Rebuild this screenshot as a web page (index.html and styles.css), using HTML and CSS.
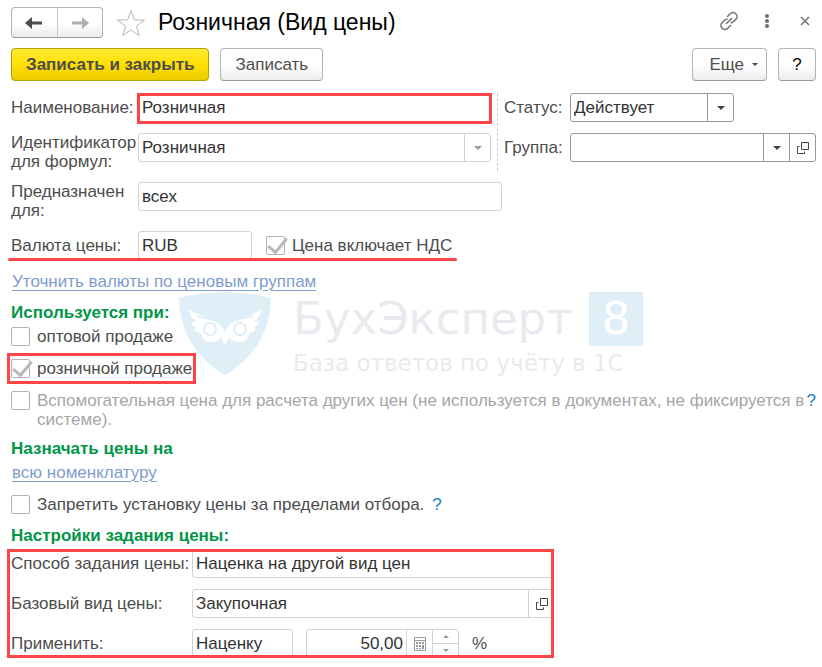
FILE: index.html
```
<!DOCTYPE html>
<html lang="ru">
<head>
  <meta charset="utf-8">
  <meta name="viewport" content="width=device-width, initial-scale=1">
  <title>Розничная (Вид цены)</title>
  <link rel="stylesheet" href="styles.css">
</head>
<body>

  <form class="window">
    <header class="header">
      <div class="nav">
        <button type="button" class="nav-btn" aria-label="Назад">
          <svg width="18" height="14" viewBox="0 0 18 14"><path d="M0 7l7-6v4.500h10v3H7V13z" fill="#4d4d4d"/></svg>
        </button>
        <button type="button" class="nav-btn" aria-label="Вперед">
          <svg width="18" height="14" viewBox="0 0 18 14"><path d="M18 7l-7-6v4.500H1v3h10V13z" fill="#b0b0b0"/></svg>
        </button>
      </div>
      <button type="button" class="star" aria-label="В избранное">
        <svg width="30" height="28" viewBox="0 0 30 28"><path d="M15 1.500l3.400 9.400 10.100.2-8.100 6 3 9.600L15 21l-8.400 5.700 3-9.600-8.100-6 10.100-.2z" fill="#fff" stroke="#b4b9be"/></svg>
      </button>
      <h1 class="title">Розничная (Вид цены)</h1>
      <div class="header-tools">
        <button type="button" class="icon-btn" aria-label="Ссылка">
          <svg width="20" height="20" viewBox="0 0 20 20" fill="none" stroke="#777" stroke-width="1.600" stroke-linecap="round"><path d="M8.500 5.500l2.700-2.700a3.600 3.600 0 0 1 5.800.2 3.700 3.700 0 0 1 0 5.200l-2.600 2.600a3.500 3.500 0 0 1-2.400 1M11.500 14.500l-2.700 2.700a3.600 3.600 0 0 1-5.800-.2 3.700 3.700 0 0 1 0-5.200l2.600-2.600a3.500 3.500 0 0 1 2.400-1M7.500 12.500l5-5"/></svg>
        </button>
        <button type="button" class="icon-btn" aria-label="Меню">
          <svg width="6" height="16" viewBox="0 0 6 16" fill="#6e6e6e"><circle cx="3" cy="3" r="2"/><circle cx="3" cy="8" r="2"/><circle cx="3" cy="13" r="2"/></svg>
        </button>
        <button type="button" class="icon-btn" aria-label="Закрыть">
          <svg width="10" height="10" viewBox="0 0 10 10" stroke="#777" stroke-width="1.600"><path d="M1 1l8 8M9 1L1 9"/></svg>
        </button>
      </div>
    </header>

    <div class="toolbar">
      <button type="button" class="btn btn-primary">Записать и закрыть</button>
      <button type="button" class="btn">Записать</button>
      <button type="button" class="btn btn-more">Еще <span class="caret"></span></button>
      <button type="button" class="btn btn-help">?</button>
    </div>

    <div class="columns">
      <div class="rows main-fields">
        <div class="row">
          <label for="name">Наименование:</label>
          <div class="field marked"><input type="text" id="name" value="Розничная"></div>
        </div>
        <div class="row">
          <label for="ident">Идентификатор для формул:</label>
          <div class="field muted">
            <select id="ident"><option>Розничная</option></select>
            <span class="cell"><span class="caret"></span></span>
          </div>
        </div>
      </div>
      <div class="rows side-fields">
        <div class="row">
          <label for="status">Статус:</label>
          <div class="field status">
            <select id="status"><option>Действует</option></select>
            <span class="cell"><span class="caret"></span></span>
          </div>
        </div>
        <div class="row">
          <label for="group">Группа:</label>
          <div class="field">
            <select id="group"><option></option></select>
            <span class="cell"><span class="caret"></span></span>
            <button type="button" class="cell" aria-label="Открыть">
              <svg width="12" height="12" viewBox="0 0 12 12" fill="none" stroke="#444"><path d="M4.500.5h7v7h-7zM2.500 4.500h-2v7h7v-2"/></svg>
            </button>
          </div>
        </div>
      </div>
    </div>

    <div class="rows more-fields">
      <div class="row">
        <label for="target">Предназначен для:</label>
        <div class="field muted"><input type="text" id="target" value="всех"></div>
      </div>
      <div class="row underlined">
        <label for="currency">Валюта цены:</label>
        <div class="currency">
          <div class="field muted"><input type="text" id="currency" value="RUB"></div>
          <label class="check"><input type="checkbox" checked> Цена включает НДС</label>
        </div>
      </div>
    </div>

    <p class="link-line"><a href="#">Уточнить валюты по ценовым группам</a></p>

    <section class="section">
      <h2>Используется при:</h2>
      <div class="checks">
        <label class="check"><input type="checkbox"> оптовой продаже</label>
        <label class="check check-marked"><input type="checkbox" checked> розничной продаже</label>
        <div class="check-line extra">
          <label class="check disabled"><input type="checkbox"> <span>Вспомогательная цена для расчета других цен (не используется в документах, не фиксируется в системе).</span></label>
          <a class="hint" href="#">?</a>
        </div>
      </div>
      <div class="watermark" aria-hidden="true">
        <svg class="shield" width="92" height="84" viewBox="0 0 92 84">
          <path d="M0 6Q46-6 92 6C91 42 74 66 46 83 18 66 1 42 0 6z" fill="#cce4f3"/>
          <path d="M10 16c6 8 19 8 27 13 5 3 8 7 9 12 1-5 4-9 9-12 8-5 21-5 27-13 0 7-3 11-7 13 2 1 3 1 5 0-1 4-3 6-6 7l3 1c-2 3-5 4-7 4 0 6-5 9-10 9-5 0-8-2-10-5l-4 9-4-9c-2 3-5 5-10 5s-10-3-10-9c-2 0-5-1-7-4l3-1c-3-1-5-3-6-7 2 1 3 1 5 0-4-2-7-6-7-13z" fill="#fff"/>
          <g fill="none" stroke="#cce4f3" stroke-width="2"><circle cx="31" cy="37" r="6"/><circle cx="61" cy="37" r="6"/><path d="M18 24c11 3 22 3 27 12M74 24c-11 3-22 3-27 12"/></g>
        </svg>
        <div class="brand">
          <div class="brand-name">БухЭксперт <span class="brand-num">8</span></div>
          <div class="brand-sub">База ответов по учёту в 1С</div>
        </div>
      </div>
    </section>

    <section class="section assign">
      <h2>Назначать цены на</h2>
      <a href="#">всю номенклатуру</a>
      <div class="check-line forbid">
        <label class="check"><input type="checkbox"> Запретить установку цены за пределами отбора.</label>
        <a class="hint" href="#">?</a>
      </div>
    </section>

    <section class="section">
      <h2>Настройки задания цены:</h2>
      <div class="settings">
        <div class="rows settings-rows">
          <div class="row">
            <label for="method">Способ задания цены:</label>
            <div class="field muted"><input type="text" id="method" value="Наценка на другой вид цен"></div>
          </div>
          <div class="row">
            <label for="base">Базовый вид цены:</label>
            <div class="field muted">
              <input type="text" id="base" value="Закупочная">
              <button type="button" class="cell" aria-label="Открыть">
                <svg width="12" height="12" viewBox="0 0 12 12" fill="none" stroke="#444"><path d="M4.500.5h7v7h-7zM2.500 4.500h-2v7h7v-2"/></svg>
              </button>
            </div>
          </div>
          <div class="row">
            <label for="apply">Применить:</label>
            <div class="apply">
              <div class="field muted"><input type="text" id="apply" value="Наценку"></div>
              <div class="field muted percent">
                <input type="text" aria-label="Процент" value="50,00">
                <button type="button" class="cell" aria-label="Калькулятор">
                  <svg width="12" height="14" viewBox="0 0 12 14"><path d="M.5.5h11v13H.5zM.5 3.500h11" fill="none" stroke="#999"/><path d="M2 5h2v2H2zM5 5h2v2H5zM8 5h2v2H8zM2 8h2v2H2zM5 8h2v2H5zM8 8h2v4H8zM2 11h2v1H2zM5 11h2v1H5z" fill="#999"/></svg>
                </button>
                <div class="cell spin">
                  <button type="button" aria-label="Больше"><span class="caret up"></span></button>
                  <button type="button" aria-label="Меньше"><span class="caret"></span></button>
                </div>
              </div>
              <span>%</span>
            </div>
          </div>
        </div>
      </div>
    </section>
  </form>

</body>
</html>
```
FILE: styles.css
```
* {
  box-sizing: border-box;
}

body {
  margin: 0;
  background: #fff;
  color: #4d4d4d;
  font: 17px/19px "Liberation Sans", Arial, sans-serif;
}

button,
input,
select {
  font: inherit;
  color: inherit;
}

button {
  cursor: pointer;
}

.window {
  padding: 7px 6px 8px 11px;
}

/* header */
.header {
  display: flex;
  align-items: center;
  height: 31px;
}

.nav {
  display: flex;
  width: 92px;
  height: 31px;
  border: 1px solid #b3b3b3;
  border-bottom-color: #999;
  border-radius: 4px;
  background: linear-gradient(#fff 50%, #ececec);
}

.nav-btn {
  flex: 1;
  display: flex;
  align-items: center;
  justify-content: center;
  padding: 0;
  border: 0;
  background: none;
}

.nav-btn + .nav-btn {
  border-left: 1px solid #c8c8c8;
}

.star {
  display: flex;
  margin: 0 12px 0 13px;
  padding: 0;
  border: 0;
  background: none;
}

.title {
  margin: 0;
  padding-bottom: 2px;
  color: #000;
  font-size: 23px;
  line-height: 28px;
  font-weight: normal;
}

.header-tools {
  display: flex;
  align-self: flex-start;
  gap: 18px;
  margin-left: auto;
  padding: 4px 1px 0 0;
}

.icon-btn {
  display: flex;
  align-items: center;
  justify-content: center;
  width: 20px;
  height: 20px;
  padding: 0;
  border: 0;
  background: none;
}

/* toolbar */
.toolbar {
  display: flex;
  gap: 11px;
  margin: 10px 0 12px;
}

.btn {
  height: 33px;
  padding: 0 14px;
  border: 1px solid #b3b3b3;
  border-bottom-color: #999;
  border-radius: 4px;
  background: linear-gradient(#fff 50%, #ececec);
}

.btn-primary {
  border-color: #b0a000;
  background: linear-gradient(#ffe933, #ffe000 50%, #ebcb00);
  font-weight: bold;
}

.btn-more {
  display: flex;
  align-items: center;
  gap: 8px;
  margin-left: auto;
  padding: 0 8px 0 16px;
}

.btn-help {
  width: 38px;
  padding: 0;
  color: #000;
}

.caret {
  border: 4px solid transparent;
  border-top-color: #444;
  border-bottom: 0;
}

.btn-more .caret {
  border-width: 3px;
  border-bottom: 0;
}

/* fields */
.columns {
  display: grid;
  grid-template-columns: 3fr 2fr;
}

.rows {
  display: grid;
  gap: 11px;
}

.row {
  display: grid;
  grid-template-columns: 127px 1fr;
  align-items: start;
}

.row > label {
  padding-top: 5px;
}

.row > label[for="ident"],
.row > label[for="target"] {
  padding-top: 0;
}

.main-fields {
  padding-right: 3px;
}

.side-fields {
  align-content: start;
  margin-left: 3px;
  padding-left: 6px;
  border-left: 1px dashed #ccc;
}

.side-fields .row {
  grid-template-columns: 66px 1fr;
}

.more-fields {
  width: 61%;
  margin-top: 11px;
}

.field {
  display: flex;
  height: 29px;
  min-width: 0;
  overflow: hidden;
  border: 1px solid #999;
  border-radius: 3px;
  background: #fff;
  color: #333;
}

.field input,
.field select {
  flex: 1;
  width: 100%;
  min-width: 0;
  margin: 0;
  padding: 0 3px;
  border: 0;
  outline: 0;
  background: none;
  appearance: none;
}

.muted {
  border-color: #d2d2d2;
}

.cell {
  flex: none;
  display: flex;
  align-items: center;
  justify-content: center;
  width: 26px;
  padding: 0;
  border: 0;
  border-left: 1px solid #999;
  background: none;
}

.muted .cell {
  border-color: #d2d2d2;
}

.muted .caret {
  border-top-color: #999;
}

.status {
  width: 164px;
}

.currency {
  display: flex;
  gap: 14px;
}

.currency .field {
  width: 114px;
}

/* red marks */
.marked {
  height: 31px;
  margin: 0 -1px -2px;
  border: 3px solid #fb4547;
  border-radius: 0;
}

.marked input {
  padding: 0 2px 2px;
}

.underlined {
  position: relative;
}

.underlined::after {
  content: "";
  position: absolute;
  left: -3px;
  bottom: -1px;
  width: 449px;
  height: 3px;
  border-radius: 2px;
  background: #fb4547;
}

.check-marked {
  position: relative;
}

.check-marked::after {
  content: "";
  position: absolute;
  inset: -6px -4px;
  border: 3px solid #fb4547;
}

/* links and checkboxes */
a {
  color: #7f9dcc;
  text-decoration: underline;
  text-decoration-thickness: 1px;
  text-underline-offset: 3px;
}

.hint {
  color: #1a7ac0;
  text-decoration: none;
}

.link-line {
  margin: 12px 0 0 1px;
}

.section {
  position: relative;
  margin-top: 12px;
}

.assign {
  margin-top: 10px;
}

.section > a {
  margin-left: 1px;
}

.section h2 {
  margin: 0 0 5px;
  color: #009646;
  font-size: 17px;
  line-height: 19px;
}

.checks {
  display: grid;
  justify-items: start;
  gap: 13px;
}

.check {
  display: flex;
  align-items: center;
  gap: 7px;
}

.check input {
  position: relative;
  flex: none;
  width: 19px;
  height: 19px;
  margin: 0;
  border: 1px solid #b3b3b3;
  border-radius: 2px;
  background: #fff;
  appearance: none;
}

.check input:checked::after {
  content: "";
  position: absolute;
  top: -3px;
  left: 5px;
  width: 8px;
  height: 16px;
  border: solid #b8b8b8;
  border-width: 0 3px 3px 0;
  transform: rotate(40deg);
}

.check-line {
  display: flex;
  gap: 8px;
}

.extra {
  gap: 2px;
}

.disabled {
  align-items: flex-start;
  color: #a6a6a6;
}

.forbid {
  margin-top: 13px;
}

/* watermark */
.watermark {
  position: absolute;
  top: -11px;
  left: 168px;
  display: flex;
  gap: 22px;
  opacity: 0.6;
  pointer-events: none;
}

.brand {
  width: 350px;
  color: #dcdce6;
  font-family: "DejaVu Sans", sans-serif;
  white-space: nowrap;
}

.brand-name {
  display: flex;
  justify-content: space-between;
  font-size: 45px;
  line-height: 54px;
}

.brand-num {
  width: 54px;
  background: #cce4f3;
  color: #fff;
  text-align: center;
}

.brand-sub {
  margin-top: 4px;
  font-size: 23px;
  line-height: 26px;
}

/* price settings */
.settings {
  width: 68%;
  height: 109px;
  margin: -1px 0 0 -4px;
  overflow: hidden;
  border: 3px solid #fb4547;
}

.settings-rows {
  margin: -3px -4px 0 1px;
}

.settings .row {
  grid-template-columns: 181px 1fr;
}

.apply {
  display: flex;
  align-items: center;
  gap: 13px;
}

.apply .field {
  width: 101px;
}

.apply .percent {
  width: 153px;
}

.percent input {
  text-align: right;
}

.spin {
  flex-direction: column;
}

.spin button {
  flex: 1;
  display: flex;
  align-items: center;
  justify-content: center;
  width: 100%;
  padding: 0;
  border: 0;
  background: none;
}

.spin button + button {
  border-top: 1px solid #d2d2d2;
}

.spin .caret {
  border-width: 3px;
  border-bottom: 0;
}

.spin .up {
  transform: rotate(180deg);
}
```
